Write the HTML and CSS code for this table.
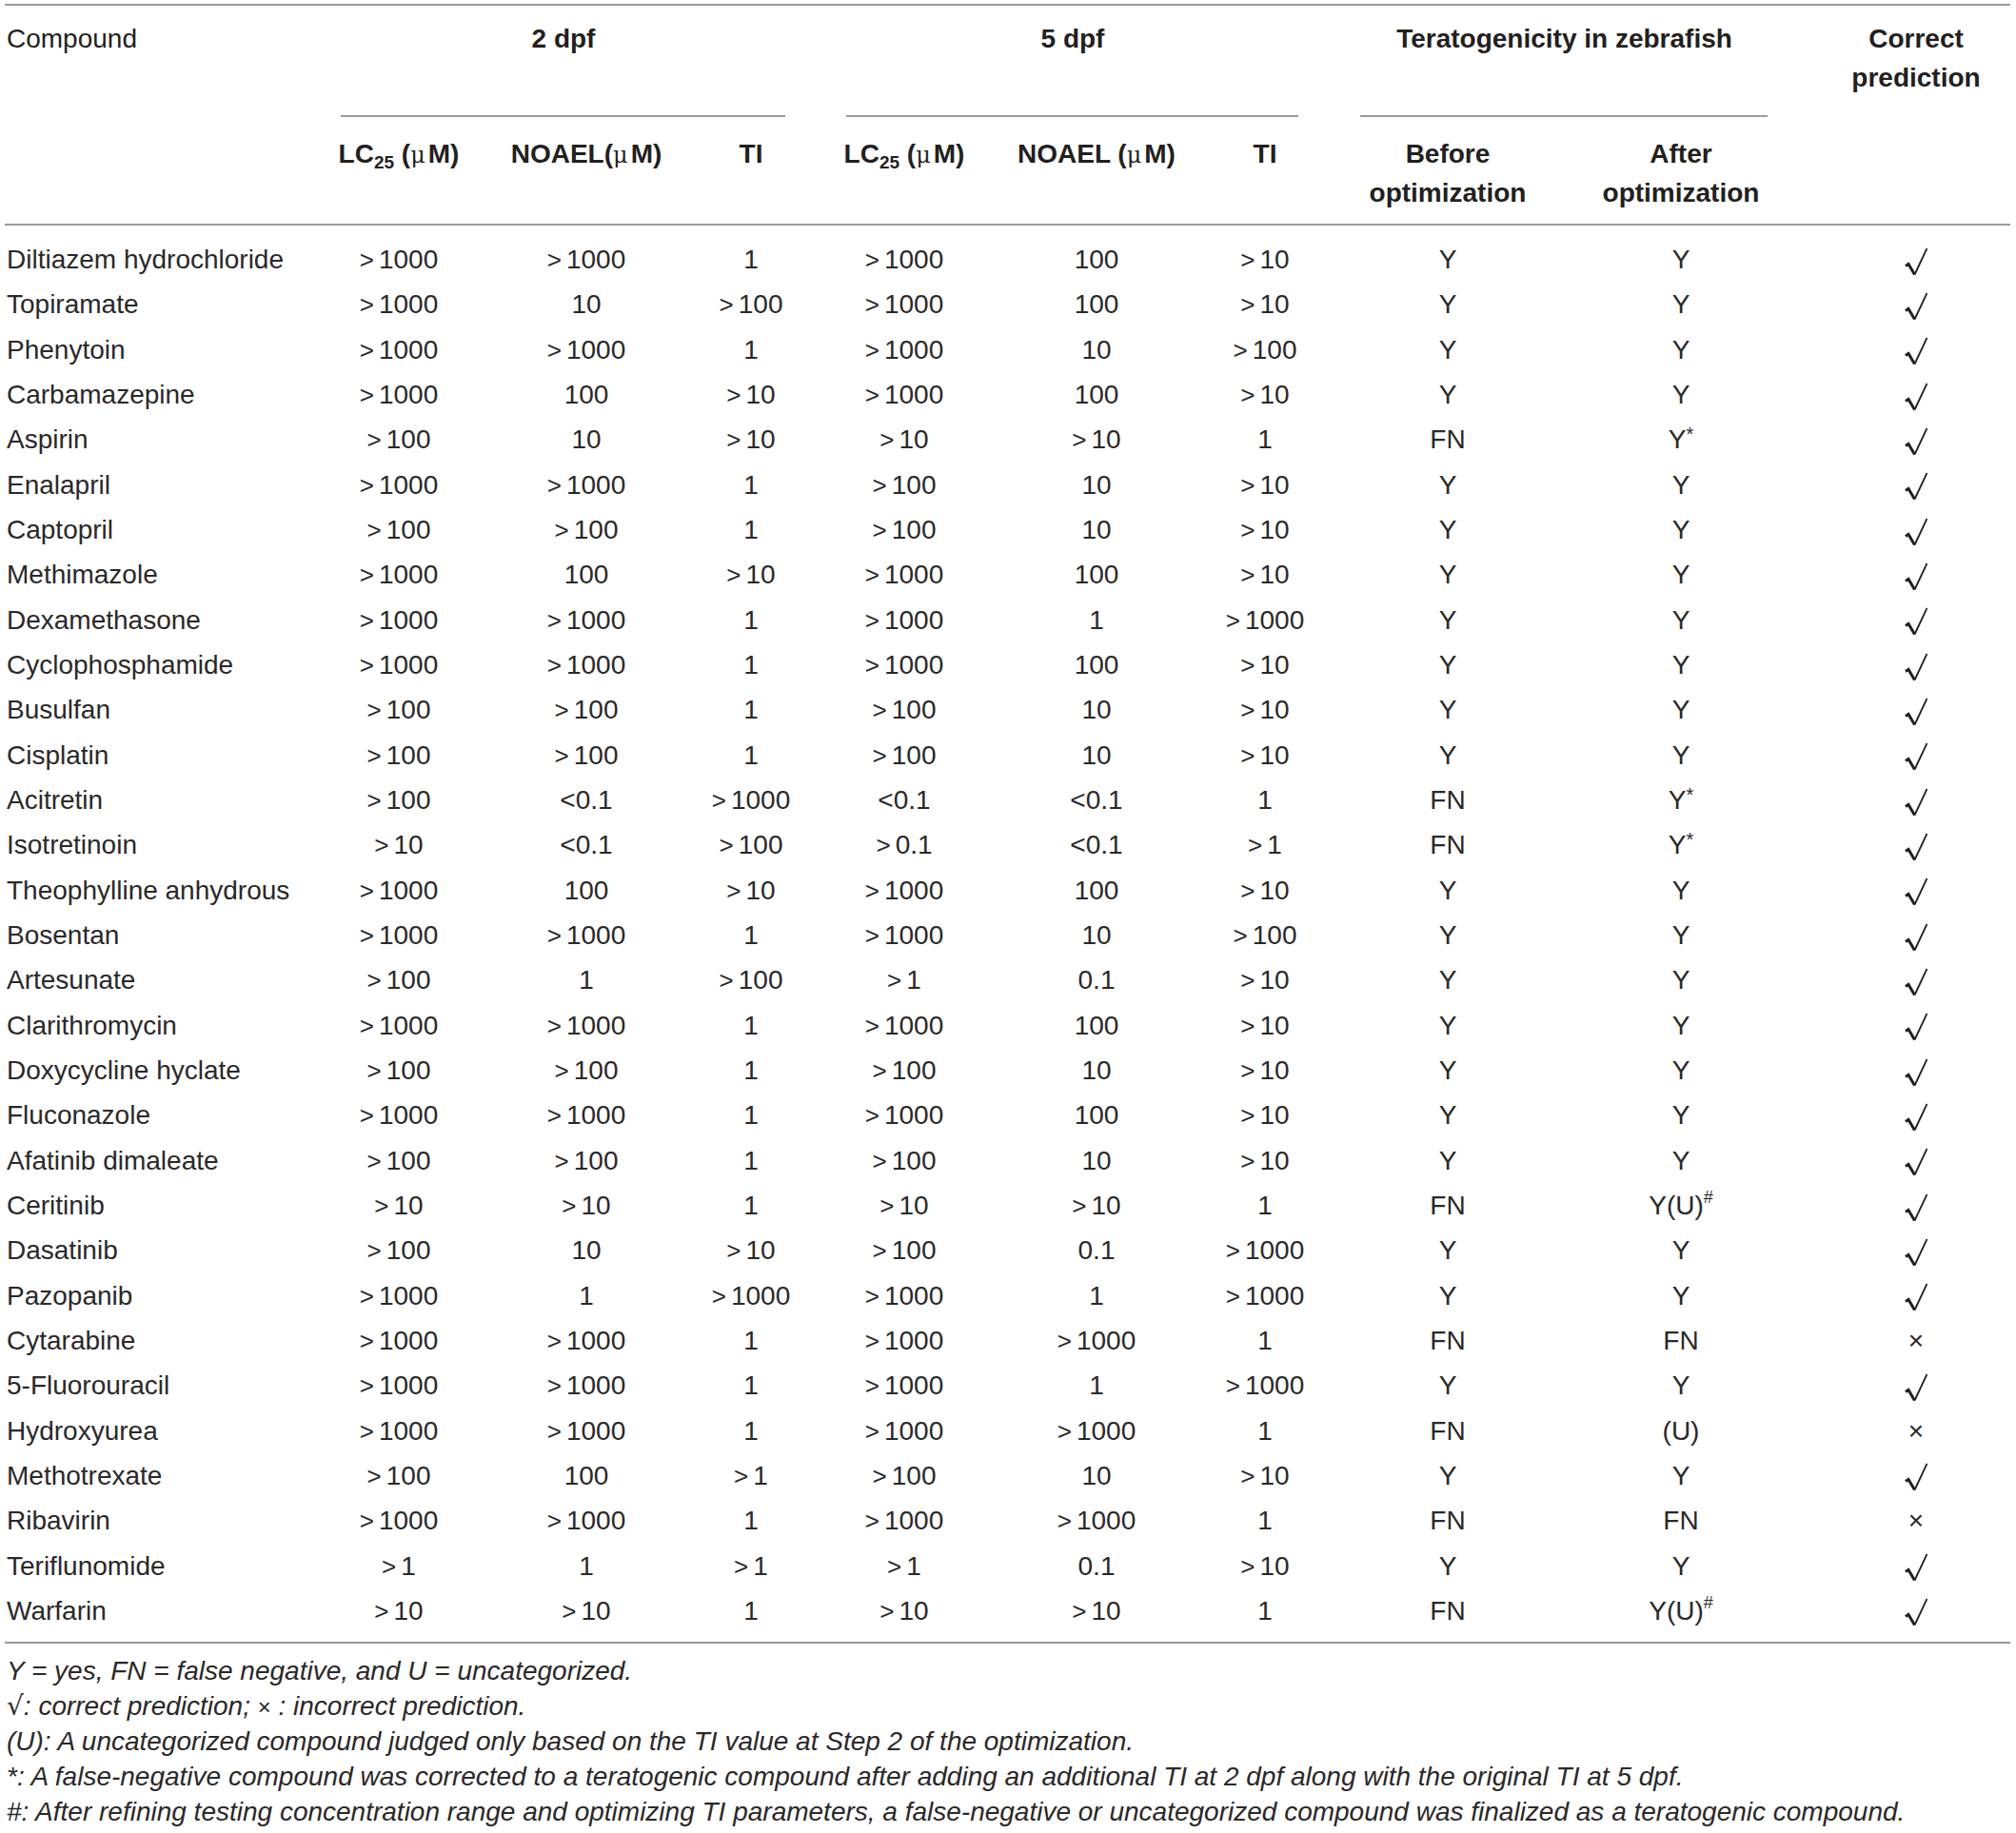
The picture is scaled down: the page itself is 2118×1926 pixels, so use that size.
FILE: index.html
```html
<!DOCTYPE html>
<html lang="en">
<head>
<meta charset="utf-8">
<title>Teratogenicity table</title>
<link rel="stylesheet" href="styles.css">
</head>
<body>
<div class="page">
<table class="tbl">
<colgroup>
<col class="c-name"><col class="c-lc"><col class="c-no"><col class="c-ti"><col class="c-lc5"><col class="c-no5"><col class="c-ti5"><col class="c-bef"><col class="c-aft"><col class="c-cor">
</colgroup>
<thead>
<tr class="h1">
<th class="name-h" rowspan="2">Compound</th>
<th class="grp" colspan="3"><div class="gtxt">2 dpf</div><div class="rule r2"></div></th>
<th class="grp" colspan="3"><div class="gtxt">5 dpf</div><div class="rule r5"></div></th>
<th class="grp tera" colspan="2"><div class="gtxt">Teratogenicity in zebrafish</div><div class="rule rt"></div></th>
<th class="cor-h" rowspan="2">Correct<br>prediction</th>
</tr>
<tr class="h2">
<th>LC<sub>25</sub> (<span class="mu">μ</span>M)</th>
<th>NOAEL(<span class="mu">μ</span>M)</th>
<th>TI</th>
<th>LC<sub>25</sub> (<span class="mu">μ</span>M)</th>
<th>NOAEL (<span class="mu">μ</span>M)</th>
<th>TI</th>
<th class="bef">Before<br>optimization</th>
<th class="aft">After<br>optimization</th>
</tr>
</thead>
<tbody>
<tr><td>Diltiazem hydrochloride</td><td><span class="gt">&gt;</span>1000</td><td><span class="gt">&gt;</span>1000</td><td>1</td><td><span class="gt">&gt;</span>1000</td><td>100</td><td><span class="gt">&gt;</span>10</td><td class="bef">Y</td><td class="aft">Y</td><td class="ok"><svg class="chk" viewBox="0 0 24 30" role="img" aria-label="√"><path d="M1 19.5 L4 17.5 L10.5 28.5" /><path class="thin" d="M10.5 28.5 L23.5 1" /></svg></td></tr>
<tr><td>Topiramate</td><td><span class="gt">&gt;</span>1000</td><td>10</td><td><span class="gt">&gt;</span>100</td><td><span class="gt">&gt;</span>1000</td><td>100</td><td><span class="gt">&gt;</span>10</td><td class="bef">Y</td><td class="aft">Y</td><td class="ok"><svg class="chk" viewBox="0 0 24 30" role="img" aria-label="√"><path d="M1 19.5 L4 17.5 L10.5 28.5" /><path class="thin" d="M10.5 28.5 L23.5 1" /></svg></td></tr>
<tr><td>Phenytoin</td><td><span class="gt">&gt;</span>1000</td><td><span class="gt">&gt;</span>1000</td><td>1</td><td><span class="gt">&gt;</span>1000</td><td>10</td><td><span class="gt">&gt;</span>100</td><td class="bef">Y</td><td class="aft">Y</td><td class="ok"><svg class="chk" viewBox="0 0 24 30" role="img" aria-label="√"><path d="M1 19.5 L4 17.5 L10.5 28.5" /><path class="thin" d="M10.5 28.5 L23.5 1" /></svg></td></tr>
<tr><td>Carbamazepine</td><td><span class="gt">&gt;</span>1000</td><td>100</td><td><span class="gt">&gt;</span>10</td><td><span class="gt">&gt;</span>1000</td><td>100</td><td><span class="gt">&gt;</span>10</td><td class="bef">Y</td><td class="aft">Y</td><td class="ok"><svg class="chk" viewBox="0 0 24 30" role="img" aria-label="√"><path d="M1 19.5 L4 17.5 L10.5 28.5" /><path class="thin" d="M10.5 28.5 L23.5 1" /></svg></td></tr>
<tr><td>Aspirin</td><td><span class="gt">&gt;</span>100</td><td>10</td><td><span class="gt">&gt;</span>10</td><td><span class="gt">&gt;</span>10</td><td><span class="gt">&gt;</span>10</td><td>1</td><td class="bef">FN</td><td class="aft">Y<sup class="ast">*</sup></td><td class="ok"><svg class="chk" viewBox="0 0 24 30" role="img" aria-label="√"><path d="M1 19.5 L4 17.5 L10.5 28.5" /><path class="thin" d="M10.5 28.5 L23.5 1" /></svg></td></tr>
<tr><td>Enalapril</td><td><span class="gt">&gt;</span>1000</td><td><span class="gt">&gt;</span>1000</td><td>1</td><td><span class="gt">&gt;</span>100</td><td>10</td><td><span class="gt">&gt;</span>10</td><td class="bef">Y</td><td class="aft">Y</td><td class="ok"><svg class="chk" viewBox="0 0 24 30" role="img" aria-label="√"><path d="M1 19.5 L4 17.5 L10.5 28.5" /><path class="thin" d="M10.5 28.5 L23.5 1" /></svg></td></tr>
<tr><td>Captopril</td><td><span class="gt">&gt;</span>100</td><td><span class="gt">&gt;</span>100</td><td>1</td><td><span class="gt">&gt;</span>100</td><td>10</td><td><span class="gt">&gt;</span>10</td><td class="bef">Y</td><td class="aft">Y</td><td class="ok"><svg class="chk" viewBox="0 0 24 30" role="img" aria-label="√"><path d="M1 19.5 L4 17.5 L10.5 28.5" /><path class="thin" d="M10.5 28.5 L23.5 1" /></svg></td></tr>
<tr><td>Methimazole</td><td><span class="gt">&gt;</span>1000</td><td>100</td><td><span class="gt">&gt;</span>10</td><td><span class="gt">&gt;</span>1000</td><td>100</td><td><span class="gt">&gt;</span>10</td><td class="bef">Y</td><td class="aft">Y</td><td class="ok"><svg class="chk" viewBox="0 0 24 30" role="img" aria-label="√"><path d="M1 19.5 L4 17.5 L10.5 28.5" /><path class="thin" d="M10.5 28.5 L23.5 1" /></svg></td></tr>
<tr><td>Dexamethasone</td><td><span class="gt">&gt;</span>1000</td><td><span class="gt">&gt;</span>1000</td><td>1</td><td><span class="gt">&gt;</span>1000</td><td>1</td><td><span class="gt">&gt;</span>1000</td><td class="bef">Y</td><td class="aft">Y</td><td class="ok"><svg class="chk" viewBox="0 0 24 30" role="img" aria-label="√"><path d="M1 19.5 L4 17.5 L10.5 28.5" /><path class="thin" d="M10.5 28.5 L23.5 1" /></svg></td></tr>
<tr><td>Cyclophosphamide</td><td><span class="gt">&gt;</span>1000</td><td><span class="gt">&gt;</span>1000</td><td>1</td><td><span class="gt">&gt;</span>1000</td><td>100</td><td><span class="gt">&gt;</span>10</td><td class="bef">Y</td><td class="aft">Y</td><td class="ok"><svg class="chk" viewBox="0 0 24 30" role="img" aria-label="√"><path d="M1 19.5 L4 17.5 L10.5 28.5" /><path class="thin" d="M10.5 28.5 L23.5 1" /></svg></td></tr>
<tr><td>Busulfan</td><td><span class="gt">&gt;</span>100</td><td><span class="gt">&gt;</span>100</td><td>1</td><td><span class="gt">&gt;</span>100</td><td>10</td><td><span class="gt">&gt;</span>10</td><td class="bef">Y</td><td class="aft">Y</td><td class="ok"><svg class="chk" viewBox="0 0 24 30" role="img" aria-label="√"><path d="M1 19.5 L4 17.5 L10.5 28.5" /><path class="thin" d="M10.5 28.5 L23.5 1" /></svg></td></tr>
<tr><td>Cisplatin</td><td><span class="gt">&gt;</span>100</td><td><span class="gt">&gt;</span>100</td><td>1</td><td><span class="gt">&gt;</span>100</td><td>10</td><td><span class="gt">&gt;</span>10</td><td class="bef">Y</td><td class="aft">Y</td><td class="ok"><svg class="chk" viewBox="0 0 24 30" role="img" aria-label="√"><path d="M1 19.5 L4 17.5 L10.5 28.5" /><path class="thin" d="M10.5 28.5 L23.5 1" /></svg></td></tr>
<tr><td>Acitretin</td><td><span class="gt">&gt;</span>100</td><td>&lt;0.1</td><td><span class="gt">&gt;</span>1000</td><td>&lt;0.1</td><td>&lt;0.1</td><td>1</td><td class="bef">FN</td><td class="aft">Y<sup class="ast">*</sup></td><td class="ok"><svg class="chk" viewBox="0 0 24 30" role="img" aria-label="√"><path d="M1 19.5 L4 17.5 L10.5 28.5" /><path class="thin" d="M10.5 28.5 L23.5 1" /></svg></td></tr>
<tr><td>Isotretinoin</td><td><span class="gt">&gt;</span>10</td><td>&lt;0.1</td><td><span class="gt">&gt;</span>100</td><td><span class="gt">&gt;</span>0.1</td><td>&lt;0.1</td><td><span class="gt">&gt;</span>1</td><td class="bef">FN</td><td class="aft">Y<sup class="ast">*</sup></td><td class="ok"><svg class="chk" viewBox="0 0 24 30" role="img" aria-label="√"><path d="M1 19.5 L4 17.5 L10.5 28.5" /><path class="thin" d="M10.5 28.5 L23.5 1" /></svg></td></tr>
<tr><td>Theophylline anhydrous</td><td><span class="gt">&gt;</span>1000</td><td>100</td><td><span class="gt">&gt;</span>10</td><td><span class="gt">&gt;</span>1000</td><td>100</td><td><span class="gt">&gt;</span>10</td><td class="bef">Y</td><td class="aft">Y</td><td class="ok"><svg class="chk" viewBox="0 0 24 30" role="img" aria-label="√"><path d="M1 19.5 L4 17.5 L10.5 28.5" /><path class="thin" d="M10.5 28.5 L23.5 1" /></svg></td></tr>
<tr><td>Bosentan</td><td><span class="gt">&gt;</span>1000</td><td><span class="gt">&gt;</span>1000</td><td>1</td><td><span class="gt">&gt;</span>1000</td><td>10</td><td><span class="gt">&gt;</span>100</td><td class="bef">Y</td><td class="aft">Y</td><td class="ok"><svg class="chk" viewBox="0 0 24 30" role="img" aria-label="√"><path d="M1 19.5 L4 17.5 L10.5 28.5" /><path class="thin" d="M10.5 28.5 L23.5 1" /></svg></td></tr>
<tr><td>Artesunate</td><td><span class="gt">&gt;</span>100</td><td>1</td><td><span class="gt">&gt;</span>100</td><td><span class="gt">&gt;</span>1</td><td>0.1</td><td><span class="gt">&gt;</span>10</td><td class="bef">Y</td><td class="aft">Y</td><td class="ok"><svg class="chk" viewBox="0 0 24 30" role="img" aria-label="√"><path d="M1 19.5 L4 17.5 L10.5 28.5" /><path class="thin" d="M10.5 28.5 L23.5 1" /></svg></td></tr>
<tr><td>Clarithromycin</td><td><span class="gt">&gt;</span>1000</td><td><span class="gt">&gt;</span>1000</td><td>1</td><td><span class="gt">&gt;</span>1000</td><td>100</td><td><span class="gt">&gt;</span>10</td><td class="bef">Y</td><td class="aft">Y</td><td class="ok"><svg class="chk" viewBox="0 0 24 30" role="img" aria-label="√"><path d="M1 19.5 L4 17.5 L10.5 28.5" /><path class="thin" d="M10.5 28.5 L23.5 1" /></svg></td></tr>
<tr><td>Doxycycline hyclate</td><td><span class="gt">&gt;</span>100</td><td><span class="gt">&gt;</span>100</td><td>1</td><td><span class="gt">&gt;</span>100</td><td>10</td><td><span class="gt">&gt;</span>10</td><td class="bef">Y</td><td class="aft">Y</td><td class="ok"><svg class="chk" viewBox="0 0 24 30" role="img" aria-label="√"><path d="M1 19.5 L4 17.5 L10.5 28.5" /><path class="thin" d="M10.5 28.5 L23.5 1" /></svg></td></tr>
<tr><td>Fluconazole</td><td><span class="gt">&gt;</span>1000</td><td><span class="gt">&gt;</span>1000</td><td>1</td><td><span class="gt">&gt;</span>1000</td><td>100</td><td><span class="gt">&gt;</span>10</td><td class="bef">Y</td><td class="aft">Y</td><td class="ok"><svg class="chk" viewBox="0 0 24 30" role="img" aria-label="√"><path d="M1 19.5 L4 17.5 L10.5 28.5" /><path class="thin" d="M10.5 28.5 L23.5 1" /></svg></td></tr>
<tr><td>Afatinib dimaleate</td><td><span class="gt">&gt;</span>100</td><td><span class="gt">&gt;</span>100</td><td>1</td><td><span class="gt">&gt;</span>100</td><td>10</td><td><span class="gt">&gt;</span>10</td><td class="bef">Y</td><td class="aft">Y</td><td class="ok"><svg class="chk" viewBox="0 0 24 30" role="img" aria-label="√"><path d="M1 19.5 L4 17.5 L10.5 28.5" /><path class="thin" d="M10.5 28.5 L23.5 1" /></svg></td></tr>
<tr><td>Ceritinib</td><td><span class="gt">&gt;</span>10</td><td><span class="gt">&gt;</span>10</td><td>1</td><td><span class="gt">&gt;</span>10</td><td><span class="gt">&gt;</span>10</td><td>1</td><td class="bef">FN</td><td class="aft">Y(U)<sup class="hash">#</sup></td><td class="ok"><svg class="chk" viewBox="0 0 24 30" role="img" aria-label="√"><path d="M1 19.5 L4 17.5 L10.5 28.5" /><path class="thin" d="M10.5 28.5 L23.5 1" /></svg></td></tr>
<tr><td>Dasatinib</td><td><span class="gt">&gt;</span>100</td><td>10</td><td><span class="gt">&gt;</span>10</td><td><span class="gt">&gt;</span>100</td><td>0.1</td><td><span class="gt">&gt;</span>1000</td><td class="bef">Y</td><td class="aft">Y</td><td class="ok"><svg class="chk" viewBox="0 0 24 30" role="img" aria-label="√"><path d="M1 19.5 L4 17.5 L10.5 28.5" /><path class="thin" d="M10.5 28.5 L23.5 1" /></svg></td></tr>
<tr><td>Pazopanib</td><td><span class="gt">&gt;</span>1000</td><td>1</td><td><span class="gt">&gt;</span>1000</td><td><span class="gt">&gt;</span>1000</td><td>1</td><td><span class="gt">&gt;</span>1000</td><td class="bef">Y</td><td class="aft">Y</td><td class="ok"><svg class="chk" viewBox="0 0 24 30" role="img" aria-label="√"><path d="M1 19.5 L4 17.5 L10.5 28.5" /><path class="thin" d="M10.5 28.5 L23.5 1" /></svg></td></tr>
<tr><td>Cytarabine</td><td><span class="gt">&gt;</span>1000</td><td><span class="gt">&gt;</span>1000</td><td>1</td><td><span class="gt">&gt;</span>1000</td><td><span class="gt">&gt;</span>1000</td><td>1</td><td class="bef">FN</td><td class="aft">FN</td><td class="no">×</td></tr>
<tr><td>5-Fluorouracil</td><td><span class="gt">&gt;</span>1000</td><td><span class="gt">&gt;</span>1000</td><td>1</td><td><span class="gt">&gt;</span>1000</td><td>1</td><td><span class="gt">&gt;</span>1000</td><td class="bef">Y</td><td class="aft">Y</td><td class="ok"><svg class="chk" viewBox="0 0 24 30" role="img" aria-label="√"><path d="M1 19.5 L4 17.5 L10.5 28.5" /><path class="thin" d="M10.5 28.5 L23.5 1" /></svg></td></tr>
<tr><td>Hydroxyurea</td><td><span class="gt">&gt;</span>1000</td><td><span class="gt">&gt;</span>1000</td><td>1</td><td><span class="gt">&gt;</span>1000</td><td><span class="gt">&gt;</span>1000</td><td>1</td><td class="bef">FN</td><td class="aft">(U)</td><td class="no">×</td></tr>
<tr><td>Methotrexate</td><td><span class="gt">&gt;</span>100</td><td>100</td><td><span class="gt">&gt;</span>1</td><td><span class="gt">&gt;</span>100</td><td>10</td><td><span class="gt">&gt;</span>10</td><td class="bef">Y</td><td class="aft">Y</td><td class="ok"><svg class="chk" viewBox="0 0 24 30" role="img" aria-label="√"><path d="M1 19.5 L4 17.5 L10.5 28.5" /><path class="thin" d="M10.5 28.5 L23.5 1" /></svg></td></tr>
<tr><td>Ribavirin</td><td><span class="gt">&gt;</span>1000</td><td><span class="gt">&gt;</span>1000</td><td>1</td><td><span class="gt">&gt;</span>1000</td><td><span class="gt">&gt;</span>1000</td><td>1</td><td class="bef">FN</td><td class="aft">FN</td><td class="no">×</td></tr>
<tr><td>Teriflunomide</td><td><span class="gt">&gt;</span>1</td><td>1</td><td><span class="gt">&gt;</span>1</td><td><span class="gt">&gt;</span>1</td><td>0.1</td><td><span class="gt">&gt;</span>10</td><td class="bef">Y</td><td class="aft">Y</td><td class="ok"><svg class="chk" viewBox="0 0 24 30" role="img" aria-label="√"><path d="M1 19.5 L4 17.5 L10.5 28.5" /><path class="thin" d="M10.5 28.5 L23.5 1" /></svg></td></tr>
<tr><td>Warfarin</td><td><span class="gt">&gt;</span>10</td><td><span class="gt">&gt;</span>10</td><td>1</td><td><span class="gt">&gt;</span>10</td><td><span class="gt">&gt;</span>10</td><td>1</td><td class="bef">FN</td><td class="aft">Y(U)<sup class="hash">#</sup></td><td class="ok"><svg class="chk" viewBox="0 0 24 30" role="img" aria-label="√"><path d="M1 19.5 L4 17.5 L10.5 28.5" /><path class="thin" d="M10.5 28.5 L23.5 1" /></svg></td></tr>
</tbody>
</table>
<div class="notes">
<p>Y = yes, FN = false negative, and U = uncategorized.</p>
<p><span class="nchk">√</span>: correct prediction; <span class="nx">×</span> : incorrect prediction.</p>
<p>(U): A uncategorized compound judged only based on the TI value at Step 2 of the optimization.</p>
<p>*: A false-negative compound was corrected to a teratogenic compound after adding an additional TI at 2 dpf along with the original TI at 5 dpf.</p>
<p>#: After refining testing concentration range and optimizing TI parameters, a false-negative or uncategorized compound was finalized as a teratogenic compound.</p>
</div>
</div>
</body>
</html>
```

FILE: styles.css
```css
html, body {
  margin: 0;
  padding: 0;
  background: #ffffff;
}

body {
  font-family: "Liberation Sans", Arial, sans-serif;
  color: #231f20;
  font-size: 28px;
}

.page {
  padding: 4px 6px 0 5px;
}

.tbl {
  width: 2107px;
  border-collapse: collapse;
  table-layout: fixed;
  border-top: 2px solid #9a9a9a;
  border-bottom: 2px solid #9a9a9a;
}

.c-name { width: 316px; }
.c-lc { width: 196px; }
.c-no { width: 198px; }
.c-ti { width: 148px; }
.c-lc5 { width: 174px; }
.c-no5 { width: 230px; }
.c-ti5 { width: 124px; }
.c-bef { width: 252px; }
.c-aft { width: 271px; }
.c-cor { width: 198px; }

th {
  font-weight: bold;
  text-align: center;
  vertical-align: top;
  padding: 0;
  line-height: 41px;
  color: #231f20;
}

.h1 th {
  padding-top: 14px;
}

.h1 th.name-h {
  text-align: left;
  font-weight: normal;
  padding-left: 2px;
}

.grp .gtxt {
  line-height: 41px;
}

.tera .gtxt {
  padding-right: 18px;
}

.rule {
  border-top: 2px solid #9a9a9a;
  margin-top: 60px;
}

.r2 { margin-left: 37px; margin-right: 38px; }
.r5 { margin-left: 26px; margin-right: 27px; }
.rt { margin-left: 38px; margin-right: 57px; }

.h2 th {
  padding-top: 18px;
  padding-bottom: 12px;
  border-bottom: 2px solid #9a9a9a;
}

.h2 th.aft {
  padding-right: 25px;
}

.h2 th.bef {
  padding-left: 8px;
}

thead tr.h1 th.name-h,
thead tr.h1 th.cor-h {
  border-bottom: 2px solid #9a9a9a;
}

sub {
  font-size: 19px;
  vertical-align: -6px;
  line-height: 0;
}

.mu {
  font-weight: normal;
  font-family: "DejaVu Serif", "Liberation Serif", serif;
  font-size: 24px;
  line-height: 0;
  margin-right: 3px;
}

td {
  padding: 0;
  text-align: center;
  line-height: 47.33px;
  height: 47.33px;
  white-space: nowrap;
  color: #2b2829;
}

td:first-child {
  text-align: left;
  padding-left: 2px;
}

td.aft {
  padding-right: 25px;
}

td.bef {
  padding-left: 8px;
}

tbody tr:first-child td {
  padding-top: 12px;
}

tbody tr:last-child td {
  padding-bottom: 9px;
}

.gt {
  margin-right: 5px;
  font-size: 26px;
  line-height: 0;
}

.ast {
  font-size: 20px;
  vertical-align: 8px;
  line-height: 0;
}

.hash {
  font-size: 18px;
  vertical-align: 12px;
  line-height: 0;
}

.chk {
  width: 24px;
  height: 30px;
  vertical-align: middle;
  fill: none;
  stroke: #231f20;
}

.chk path {
  stroke-width: 3;
  stroke-linejoin: miter;
  stroke-linecap: butt;
}

.chk path.thin {
  stroke-width: 1.8;
}

.no {
  font-size: 28px;
  line-height: 47.33px;
}

.notes {
  padding-top: 10px;
}

.notes p {
  margin: 0;
  font-style: italic;
  line-height: 37px;
  font-size: 28px;
  color: #2b2829;
  padding-left: 2px;
}

.nchk {
  font-family: "DejaVu Sans", sans-serif;
  font-style: normal;
  font-size: 28px;
  line-height: 0;
}

.nx {
  font-style: normal;
  font-size: 24px;
  line-height: 0;
}
```
